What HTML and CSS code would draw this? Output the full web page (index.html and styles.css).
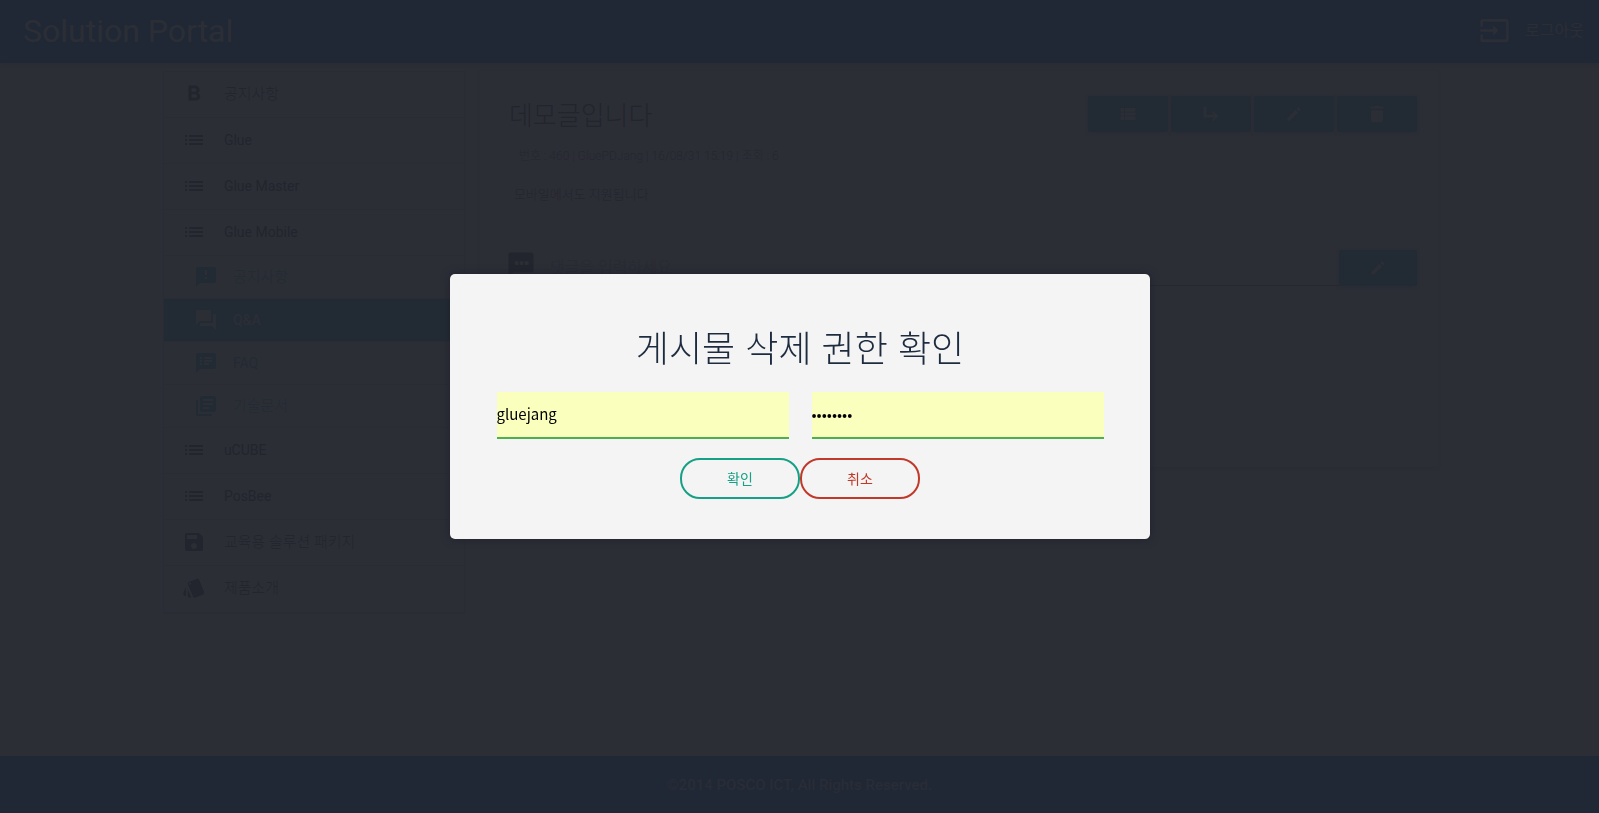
FILE: index.html
```html
<!DOCTYPE html>
<html lang="ko">
<head>
<meta charset="utf-8">
<title>Solution Portal</title>
<link rel="stylesheet" href="styles.css">
</head>
<body>
<svg class="sprite" aria-hidden="true">
  <symbol id="list" viewBox="0 0 24 24"><path d="M3 13h2v-2H3v2zm0 4h2v-2H3v2zm0-8h2V7H3v2zm4 4h14v-2H7v2zm0 4h14v-2H7v2zM7 7v2h14V7H7z"/></symbol>
  <symbol id="pencil" viewBox="0 0 24 24"><path d="M3 17.25V21h3.75L17.81 9.94l-3.75-3.75L3 17.25zM20.71 7.04c.39-.39.39-1.02 0-1.41l-2.34-2.34c-.39-.39-1.02-.39-1.41 0l-1.83 1.83 3.75 3.75 1.83-1.83z"/></symbol>
</svg>
<header class="topbar">
  <h1 class="brand">Solution Portal</h1>
  <a class="logout" href="#">
    <svg class="logout-icon" viewBox="0 0 24 24"><path d="M1 9V5a2 2 0 0 1 2-2h18a2 2 0 0 1 2 2v14a2 2 0 0 1-2 2H3a2 2 0 0 1-2-2v-4h2v4h18V5H3v4zM11 16l4-4-4-4v3H1v2h10z"/></svg>
    <span>로그아웃</span>
  </a>
</header>
<main class="page">
  <nav class="menu card">
    <a class="item korean" href="#"><svg class="icon" viewBox="0 0 24 24"><path d="M15.600 11.200c1.300-.8 2-1.900 2-3.200 0-2.700-2-4.500-4.600-4.500H6.500v15h7.300c2.600 0 4.500-1.900 4.500-4.200 0-1.500-1-2.600-2.700-3.100zM9.500 6.200h3.200c1.100 0 1.800.7 1.800 1.700s-.7 1.800-1.800 1.800H9.500zM13.200 15.800H9.500v-3.600h3.700c1.200 0 1.900.8 1.900 1.800s-.7 1.800-1.900 1.800z" fill-rule="evenodd"/></svg>공지사항</a>
    <a class="item" href="#"><svg class="icon"><use href="#list"/></svg>Glue</a>
    <a class="item" href="#"><svg class="icon"><use href="#list"/></svg>Glue Master</a>
    <a class="item" href="#"><svg class="icon"><use href="#list"/></svg>Glue Mobile</a>
    <a class="item sub korean" href="#"><svg class="icon" viewBox="0 0 24 24"><path d="M20 2H4c-1.100 0-2 .9-2 2v18l4-4h14c1.100 0 2-.9 2-2V4c0-1.100-.9-2-2-2zm-7 12h-2v-2h2v2zm0-4h-2V5h2v5z"/></svg>공지사항</a>
    <a class="item sub active" href="#" aria-current="page"><svg class="icon" viewBox="0 0 24 24"><path d="M21 6h-2v9H6v2c0 .55.45 1 1 1h11l4 4V7c0-.55-.45-1-1-1zm-4 6V3c0-.55-.45-1-1-1H3c-.55 0-1 .45-1 1v14l4-4h10c.55 0 1-.45 1-1z"/></svg>Q&amp;A</a>
    <a class="item sub" href="#"><svg class="icon" viewBox="0 0 24 24"><path d="M20 2H4c-1.100 0-2 .9-2 2v18l4-4h14c1.100 0 2-.9 2-2V4c0-1.100-.9-2-2-2zM8 14H6v-2h2v2zm0-3H6V9h2v2zm0-3H6V6h2v2zm7 6h-5v-2h5v2zm3-3h-8V9h8v2zm0-3h-8V6h8v2z"/></svg>FAQ</a>
    <a class="item sub korean" href="#"><svg class="icon" viewBox="0 0 24 24"><path d="M4 6H2v14c0 1.100.9 2 2 2h14v-2H4V6zm16-4H8c-1.100 0-2 .9-2 2v12c0 1.100.9 2 2 2h12c1.100 0 2-.9 2-2V4c0-1.100-.9-2-2-2zm-1 9H9V9h10v2zm-4 4H9v-2h6v2zm4-8H9V5h10v2z"/></svg>기술문서</a>
    <a class="item" href="#"><svg class="icon"><use href="#list"/></svg>uCUBE</a>
    <a class="item" href="#"><svg class="icon"><use href="#list"/></svg>PosBee</a>
    <a class="item korean" href="#"><svg class="icon" viewBox="0 0 24 24"><path d="M17 3H5c-1.110 0-2 .9-2 2v14c0 1.100.89 2 2 2h14c1.100 0 2-.9 2-2V7l-4-4zm-5 16c-1.660 0-3-1.340-3-3s1.340-3 3-3 3 1.340 3 3-1.340 3-3 3zm3-10H5V5h10v4z"/></svg>교육용 솔루션 패키지</a>
    <a class="item korean" href="#"><svg class="icon" viewBox="0 0 24 24"><path d="M2.530 19.650l1.340.56v-9.030l-2.430 5.860c-.41 1.020.08 2.190 1.090 2.610zm19.500-3.700L17.070 3.980c-.31-.75-1.040-1.210-1.810-1.230-.26 0-.53.04-.79.15L7.100 5.950c-.75.31-1.210 1.030-1.230 1.800-.01.27.04.54.15.8l4.960 11.970c.31.76 1.050 1.220 1.830 1.230.26 0 .52-.05.77-.15l7.360-3.050c1.020-.42 1.510-1.590 1.090-2.600zM7.880 8.750c-.55 0-1-.45-1-1s.45-1 1-1 1 .45 1 1-.45 1-1 1zm-2 11c0 1.100.9 2 2 2h1.450l-3.450-8.340v6.340z"/></svg>제품소개</a>
  </nav>
  <article class="post">
    <div class="post-head">
      <h2 class="post-title">데모글입니다</h2>
      <div class="actions">
        <button class="btn" type="button" aria-label="목록"><svg class="small" viewBox="0 0 24 24"><path d="M2 4h5v5H2zM8 4h14v5H8zM2 10h5v4H2zM8 10h14v4H8zM2 15h5v5H2zM8 15h14v5H8z"/></svg></button>
        <button class="btn" type="button" aria-label="답글"><svg class="small" viewBox="0 0 24 24"><path d="M22 15l-7 7-2-2 3.500-3.500H2V2h4v11h10.500L13 10l2-2z"/></svg></button>
        <button class="btn" type="button" aria-label="수정"><svg class="small"><use href="#pencil"/></svg></button>
        <button class="btn" type="button" aria-label="삭제"><svg class="small" viewBox="0 0 24 24"><path d="M4 7v14c0 1.100.9 2 2 2h12c1.100 0 2-.9 2-2V7zM21 2h-5l-1-1H9L8 2H3v3h18z"/></svg></button>
      </div>
    </div>
    <p class="meta">번호 : 460 | GluePDJang | 16/08/31 15:19 | 조회 : 6</p>
    <p class="body">모바일에서도 지원됩니다</p>
    <form class="comment">
      <svg class="comment-icon" viewBox="0 0 24 24"><path d="M20 2H4a2 2 0 0 0-2 2v18l4-4h14a2 2 0 0 0 2-2V4a2 2 0 0 0-2-2zM7 9h3v3H7zM11 9h3v3h-3zM15 9h3v3h-3z" fill-rule="evenodd"/></svg>
      <input class="comment-input" type="text" placeholder="댓글을 입력하세요" aria-label="댓글">
      <button class="btn submit" type="button" aria-label="댓글 등록"><svg class="small"><use href="#pencil"/></svg></button>
    </form>
  </article>
</main>
<footer class="footer">©2014 POSCO ICT, All Rights Reserved.</footer>
<div class="overlay">
  <form class="modal" role="dialog" aria-modal="true" aria-labelledby="modal-title">
    <h2 class="modal-title" id="modal-title">게시물 삭제 권한 확인</h2>
    <div class="fields">
      <input class="field" type="text" value="gluejang" aria-label="아이디">
      <input class="field" type="password" value="password" aria-label="비밀번호">
    </div>
    <div class="choices">
      <button class="pill ok" type="button">확인</button>
      <button class="pill cancel" type="button">취소</button>
    </div>
  </form>
</div>
</body>
</html>
```
FILE: styles.css
```css
:root {
  --page: #2c2e36;
  --bar: #212835;
  --teal: #222b33;
  --ink: #22252d;
  --line: #292c34;
}
* { box-sizing: border-box; }
body {
  display: flex;
  flex-direction: column;
  min-height: 100vh;
  margin: 0;
  background: var(--page);
  color: var(--ink);
  font: 400 14px/20px Roboto, "Noto Sans CJK KR", sans-serif;
}
h1, h2, p { margin: 0; }
a { color: inherit; text-decoration: none; }
svg { fill: currentColor; flex: none; }
.sprite { display: none; }

.topbar {
  display: flex;
  align-items: center;
  justify-content: space-between;
  height: 63px;
  padding: 0 15px 2px 23px;
  background: var(--bar);
  color: #2c2e36;
  box-shadow: 0 1px 3px #292c34;
}
.brand { font-size: 32px; font-weight: 400; line-height: 40px; }
.logout { display: flex; align-items: center; gap: 15px; font-size: 16px; }
.logout-icon { width: 31px; height: 31px; }

.page {
  display: grid;
  grid-template-columns: 302px 1fr;
  gap: 15px;
  align-items: start;
  flex: 1;
  width: 80%;
  margin: 0 auto;
  padding: 8px 1px 32px 3px;
}
.card { border: 1px solid var(--line); }
.menu { border-bottom-width: 2px; }
.item {
  display: flex;
  align-items: center;
  gap: 18px;
  height: 46px;
  padding: 0 18px 2px;
  border-bottom: 1px solid var(--line);
}
.item:last-child { border-bottom: 0; }
.korean { font-size: 15px; font-weight: 300; }
.icon { width: 24px; height: 24px; }
.sub { height: 43px; gap: 15px; padding: 0 30px 1px; color: var(--teal); }
.active { background: var(--teal); color: var(--page); font-weight: 500; }

.post {
  min-height: 396px;
  padding: 25px 21px 0 29px;
  box-shadow: 0 1px 2px #2a2c34;
}
.post-head { display: flex; align-items: center; justify-content: space-between; }
.post-title { padding-top: 4px; font-size: 26px; font-weight: 300; line-height: 32px; }
.actions { display: flex; gap: 3px; }
.btn {
  display: grid;
  place-items: center;
  width: 80px;
  height: 36px;
  padding: 0;
  border: 0;
  border-radius: 2px;
  background: var(--teal);
  color: var(--page);
  box-shadow: 0 1px 3px #292c34;
}
.submit { width: 78px; }
.small { width: 18px; height: 18px; }
.meta { padding: 14px 10px 0; font-size: 12px; font-weight: 300; color: #24272f; }
.body { padding: 19px 5px 0; font-size: 13px; font-weight: 300; }
.comment { display: flex; margin-top: 45px; }
.comment-icon { width: 30px; height: 30px; margin: 0 14px 0 -3px; }
.comment-input {
  flex: 1;
  min-width: 0;
  height: 36px;
  padding: 0;
  border: 0;
  border-bottom: 1px solid #26282f;
  background: transparent;
  font: inherit;
  font-size: 16px;
}
.comment-input::placeholder { color: #292b33; opacity: 1; }

.footer {
  padding: 20px 0 18px;
  background: var(--bar);
  color: #292d37;
  font-size: 15px;
  font-weight: 500;
  line-height: 19px;
  text-align: center;
}

.overlay { position: fixed; inset: 0; display: grid; place-items: center; }
.modal {
  width: 700px;
  max-width: 100%;
  padding: 46px 46px 40px 47px;
  border-radius: 5px;
  background: #f4f4f4;
  box-shadow: 0 0 8px #1f202c;
}
.modal-title {
  color: #1d2b3e;
  font: 300 36px/52px "Noto Sans CJK KR", sans-serif;
  text-align: center;
}
.fields { display: grid; grid-template-columns: 1fr 1fr; gap: 23px; margin: 20px 0 19px; }
.field {
  min-width: 0;
  height: 47px;
  padding: 0 0 2px;
  border: 0;
  border-bottom: 2px solid #4caf50;
  background: #faffbd;
  color: #000;
  font: 400 15px/22px "Noto Sans CJK KR", sans-serif;
}
.choices { display: flex; justify-content: center; }
.pill {
  width: 120px;
  height: 41px;
  padding: 0 0 2px;
  border: 2px solid;
  border-radius: 20px;
  background: transparent;
  font: 400 14px/20px "Noto Sans CJK KR", sans-serif;
}
.ok { color: #16a085; }
.cancel { color: #c0392b; }
```
